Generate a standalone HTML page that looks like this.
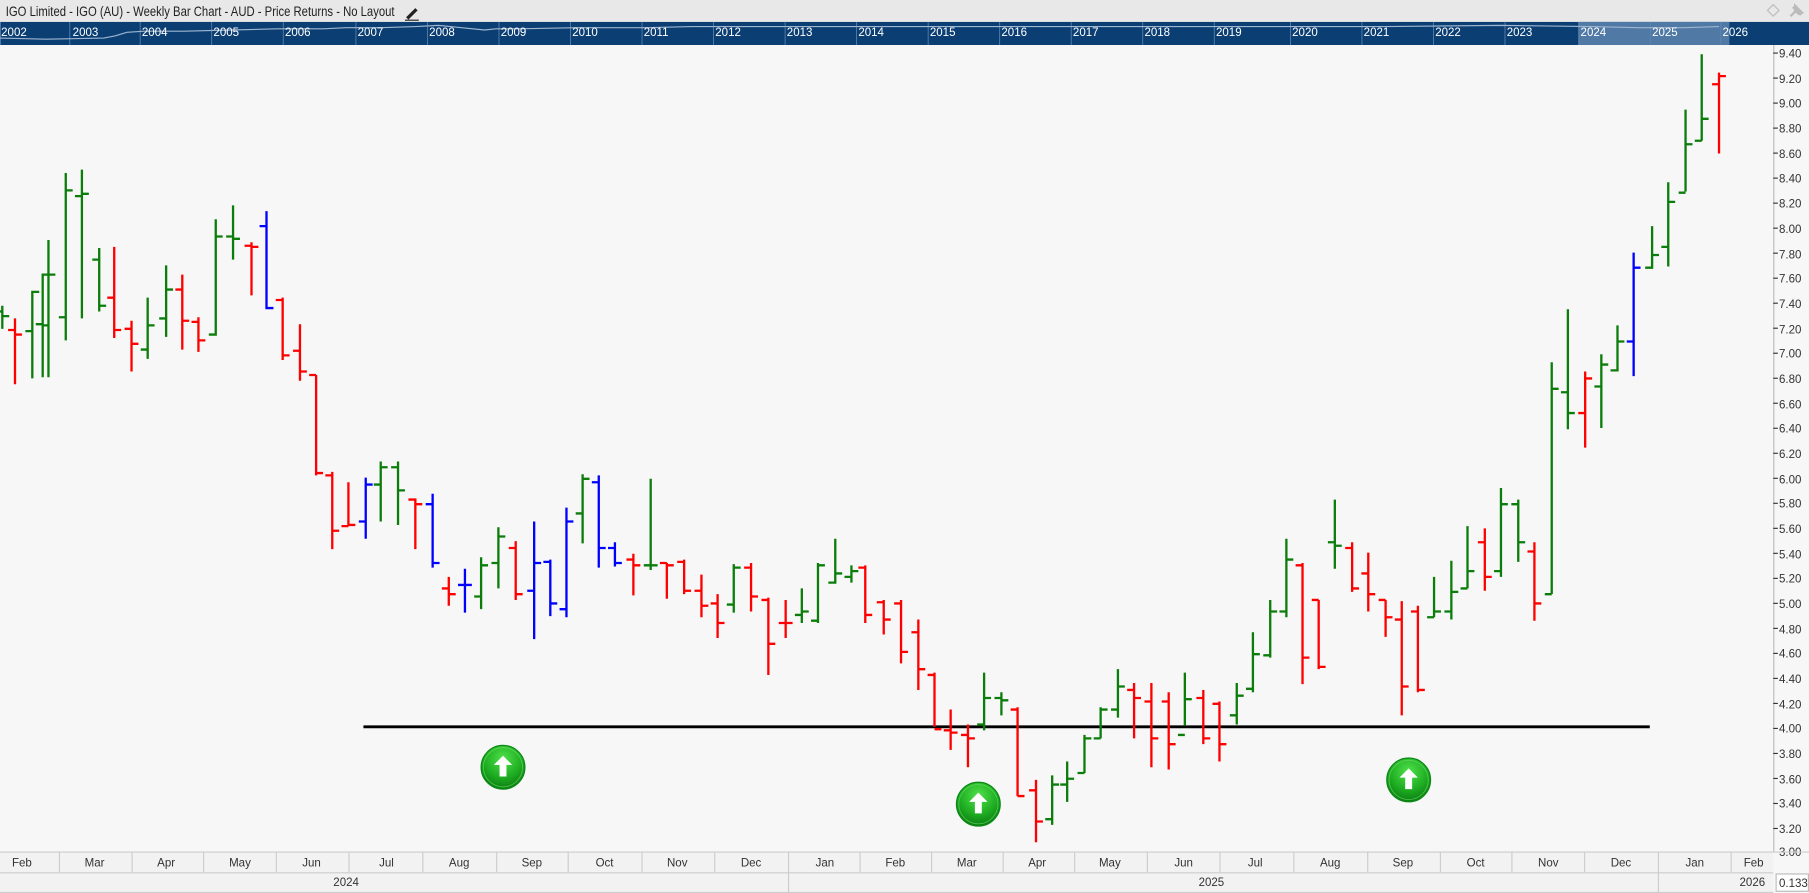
<!DOCTYPE html>
<html><head><meta charset="utf-8">
<style>
html,body{margin:0;padding:0;background:#f7f7f7;overflow:hidden}
svg{display:block}
text{font-family:"Liberation Sans",sans-serif}
</style></head>
<body>
<svg id="s" width="1809" height="893" viewBox="0 0 1568 774" preserveAspectRatio="none" xmlns="http://www.w3.org/2000/svg">
<defs>
<radialGradient id="gg" cx="50%" cy="30%" r="70%">
<stop offset="0" stop-color="#4fe04a"/><stop offset="0.6" stop-color="#1fae22"/><stop offset="1" stop-color="#0b7d12"/>
</radialGradient>
</defs>
<rect x="0" y="0" width="1568" height="774" fill="#f7f7f7"/>
<rect x="0" y="0" width="1568" height="19" fill="#e8e8e8"/>
<text x="5" y="14" font-size="12" fill="#222" textLength="337" lengthAdjust="spacingAndGlyphs">IGO Limited - IGO (AU) - Weekly Bar Chart - AUD - Price Returns - No Layout</text>
<path d="M352 15 L360 7 L362 9 L354 17 Z" fill="#222"/><line x1="351" y1="17.5" x2="363" y2="17.5" stroke="#222" stroke-width="1"/>
<path d="M1537 4 L1542 9 L1537 14 L1532 9 Z" fill="none" stroke="#bbb" stroke-width="1"/>
<path d="M1552 14 L1556 10 M1554 6 L1561 13 M1556 5 L1562 11 L1559 12 L1556 9 Z" stroke="#bbb" stroke-width="2" fill="#bbb"/>
<rect x="0" y="19" width="1568" height="20" fill="#0b3e73"/>
<rect x="1368" y="19" width="131" height="20" fill="#5079a6"/>
<g id="nav" stroke="#5e86b3" stroke-width="0.7"></g>
<polyline fill="none" stroke="#9fb6d0" stroke-width="1" points="0,33 40,34 90,33 100,31 110,28 125,27 160,27 200,26 240,25 280,25 300,24 330,24 360,23 380,22 400,24 420,26 430,25 450,25 500,24 560,24 600,23 700,23 800,23 900,23 1000,23 1100,23 1200,23 1300,22 1380,23 1420,24 1460,24 1490,23"/>
<g font-size="10" fill="#fff">
<text x="1" y="31">2002</text><text x="63" y="31">2003</text><text x="123" y="31">2004</text><text x="185" y="31">2005</text><text x="247" y="31">2006</text><text x="310" y="31">2007</text><text x="372" y="31">2008</text><text x="434" y="31">2009</text><text x="496" y="31">2010</text><text x="558" y="31">2011</text><text x="620" y="31">2012</text><text x="682" y="31">2013</text><text x="744" y="31">2014</text><text x="806" y="31">2015</text><text x="868" y="31">2016</text><text x="930" y="31">2017</text><text x="992" y="31">2018</text><text x="1054" y="31">2019</text><text x="1120" y="31">2020</text><text x="1182" y="31">2021</text><text x="1244" y="31">2022</text><text x="1306" y="31">2023</text><text x="1370" y="31">2024</text><text x="1432" y="31">2025</text><text x="1493" y="31">2026</text>
</g>
<line x1="1537.5" y1="39" x2="1537.5" y2="738" stroke="#bbb" stroke-width="1"/>
<g font-size="10" fill="#333">
<text x="1542" y="50">9.40</text><text x="1542" y="72">9.20</text><text x="1542" y="93">9.00</text><text x="1542" y="115">8.80</text><text x="1542" y="137">8.60</text><text x="1542" y="158">8.40</text><text x="1542" y="180">8.20</text><text x="1542" y="202">8.00</text><text x="1542" y="224">7.80</text><text x="1542" y="245">7.60</text><text x="1542" y="267">7.40</text><text x="1542" y="289">7.20</text><text x="1542" y="310">7.00</text><text x="1542" y="332">6.80</text><text x="1542" y="354">6.60</text><text x="1542" y="375">6.40</text><text x="1542" y="397">6.20</text><text x="1542" y="419">6.00</text><text x="1542" y="440">5.80</text><text x="1542" y="462">5.60</text><text x="1542" y="484">5.40</text><text x="1542" y="505">5.20</text><text x="1542" y="527">5.00</text><text x="1542" y="549">4.80</text><text x="1542" y="570">4.60</text><text x="1542" y="592">4.40</text><text x="1542" y="614">4.20</text><text x="1542" y="635">4.00</text><text x="1542" y="657">3.80</text><text x="1542" y="679">3.60</text><text x="1542" y="700">3.40</text><text x="1542" y="722">3.20</text><text x="1542" y="742">3.00</text>
</g>
<g id="tk" stroke="#333" stroke-width="1"></g>
<line x1="315" y1="630" x2="1430" y2="630" stroke="#000" stroke-width="2.5"/>
<g id="bars" stroke-width="2" fill="none"></g>
<g id="arr"></g>
<rect x="0" y="738" width="1537" height="36" fill="#f2f2f2"/>
<line x1="0" y1="738.5" x2="1568" y2="738.5" stroke="#ccc"/>
<line x1="0" y1="756.5" x2="1537" y2="756.5" stroke="#ccc"/>
<line x1="0" y1="773.5" x2="1537" y2="773.5" stroke="#ccc"/>
<g id="mdiv" stroke="#ccc"></g>
<g font-size="10" fill="#333" text-anchor="middle">
<text x="19" y="751">Feb</text><text x="82" y="751">Mar</text><text x="144" y="751">Apr</text><text x="208" y="751">May</text><text x="270" y="751">Jun</text><text x="335" y="751">Jul</text><text x="398" y="751">Aug</text><text x="461" y="751">Sep</text><text x="524" y="751">Oct</text><text x="587" y="751">Nov</text><text x="651" y="751">Dec</text><text x="715" y="751">Jan</text><text x="776" y="751">Feb</text><text x="838" y="751">Mar</text><text x="899" y="751">Apr</text><text x="962" y="751">May</text><text x="1026" y="751">Jun</text><text x="1088" y="751">Jul</text><text x="1153" y="751">Aug</text><text x="1216" y="751">Sep</text><text x="1279" y="751">Oct</text><text x="1342" y="751">Nov</text><text x="1405" y="751">Dec</text><text x="1469" y="751">Jan</text><text x="1520" y="751">Feb</text>
<text x="300" y="768">2024</text><text x="1050" y="768">2025</text>
</g>
<text x="1530" y="768" font-size="10" fill="#333" text-anchor="end">2026</text>
<line x1="683.5" y1="756" x2="683.5" y2="774" stroke="#ccc"/>
<line x1="1437.5" y1="756" x2="1437.5" y2="774" stroke="#ccc"/>
<rect x="1539.5" y="757.5" width="28" height="15" fill="#fff" stroke="#bbb"/>
<text x="1542" y="769" font-size="10" fill="#333">0.133</text>
</svg>
<script>
var NS="http://www.w3.org/2000/svg";
function el(p,n,a){var e=document.createElementNS(NS,n);for(var k in a)e.setAttribute(k,a[k]);p.appendChild(e);return e;}
var nav=document.getElementById('nav');
[0,60,121,183,245,308,370,432,494,556,618,680,742,804,866,928,990,1052,1118,1180,1242,1304,1368,1430,1491].forEach(function(x){el(nav,'line',{x1:x+.5,y1:19,x2:x+.5,y2:39});});
var tk=document.getElementById('tk');
for(var i=0;i<32;i++){var y=46+i*21.68;el(tk,'line',{x1:1537,y1:y,x2:1541,y2:y});}
var md=document.getElementById('mdiv');
[51,114,176,239,302,366,430,492,556,619,683,745,807,869,931,994,1057,1121,1185,1248,1310,1373,1437,1500].forEach(function(x){el(md,'line',{x1:x+.5,y1:738,x2:x+.5,y2:756});});
var G='#0a7d0a',R='#ff0000',B='#0000ff';
var d=[
[2,265,285,270,274,G],[13,276,333,286,290,R],[28,252,328,287,253,G],[37,237,327,281,238,G],[42,208,327,282,238,G],
[57,150,295,275,165,G],[71,147,276,170,168,G],[86,215,270,225,265,G],[99,214,293,258,286,R],[114,278,322,285,298,R],
[128,258,311,303,282,G],[144,230,292,276,251,G],[158,238,303,251,278,R],[172,275,305,279,295,R],[187,190,291,290,205,G],
[202,178,225,205,207,G],[218,210,256,213,214,R],[231,183,268,196,267,B],[245,258,312,260,308,R],[260,281,330,304,322,R],
[274,325,412,325,410,R],[288,409,476,412,460,R],[302,418,456,456,455,R],[317,414,467,452,420,B],[330,400,452,420,405,G],
[345,400,455,405,425,G],[360,432,476,433,437,R],[375,428,492,437,488,B],[389,500,525,510,515,R],[403,493,531,507,507,B],
[417,483,528,517,490,G],[432,457,510,488,465,G],[447,469,520,475,515,R],[463,452,554,512,488,B],[477,485,534,487,523,B],
[491,440,535,528,452,B],[505,411,471,445,415,G],[519,412,492,418,475,B],[533,470,491,475,488,B],[549,480,516,485,490,R],
[564,415,494,490,490,G],[578,488,519,488,490,R],[593,485,515,487,512,R],[608,498,535,512,525,R],[622,515,553,523,540,R],
[636,489,531,524,492,G],[651,488,530,492,517,R],[666,518,585,520,558,R],[681,520,553,540,540,R],[695,510,540,533,530,G],
[709,488,540,538,490,G],[724,467,506,505,497,G],[738,490,505,500,495,G],[750,490,540,492,533,R],[766,520,550,522,537,R],
[781,520,575,523,565,R],[796,537,598,548,580,R],[810,583,630,585,632,R],[824,615,650,633,635,R],[839,628,665,637,640,R],
[853,583,633,628,605,G],[868,600,620,605,607,G],[882,613,690,615,690,R],[898,676,730,685,712,R],[912,672,715,710,680,G],
[925,660,695,680,675,G],[940,637,670,670,640,G],[954,613,640,640,615,G],[969,580,622,615,595,G],[983,592,640,598,605,R],
[998,592,665,608,640,R],[1013,600,667,608,645,R],[1027,583,629,637,606,G],[1043,598,645,605,640,R],[1057,608,660,610,645,R],
[1072,592,628,620,603,G],[1086,548,600,597,567,G],[1101,520,570,568,530,G],[1115,467,535,530,485,G],[1129,488,593,490,570,R],
[1143,520,580,520,578,R],[1157,433,493,470,473,G],[1172,470,513,475,510,R],[1186,479,530,497,515,R],[1201,520,552,520,535,R],
[1215,521,620,537,595,R],[1229,525,600,530,598,R],[1243,500,535,535,530,G],[1258,486,537,530,513,G],[1272,456,510,510,495,G],
[1287,458,512,470,500,R],[1301,423,500,495,437,G],[1316,433,487,437,470,G],[1330,470,538,478,523,R],[1345,314,515,515,337,G],
[1359,268,372,340,358,G],[1374,322,388,358,328,R],[1388,307,371,335,316,G],[1402,282,322,321,296,G],[1416,219,326,296,232,B],
[1432,196,233,232,221,G],[1446,158,231,214,175,G],[1461,95,166,167,125,G],[1475,47,122,122,103,G],[1490,63,133,73,66,R]];
var bars=document.getElementById('bars');
d.forEach(function(b){var x=b[0];el(bars,'path',{stroke:b[5],d:'M'+x+' '+b[1]+'V'+b[2]+'M'+(x-6)+' '+b[3]+'H'+x+'M'+x+' '+b[4]+'H'+(x+6)});});
var arr=document.getElementById('arr');
[[436,665],[848,697],[1221,676]].forEach(function(c){
el(arr,'circle',{cx:c[0],cy:c[1],r:19,fill:'url(#gg)',stroke:'#0a8a14','stroke-width':1});
el(arr,'circle',{cx:c[0],cy:c[1],r:17,fill:'none',stroke:'#6fe06a','stroke-width':0.8,opacity:0.6});
el(arr,'path',{fill:'#fff',d:'M'+c[0]+' '+(c[1]-10)+'l-8 8h5v10h6v-10h5z'});});
</script>
</body></html>
